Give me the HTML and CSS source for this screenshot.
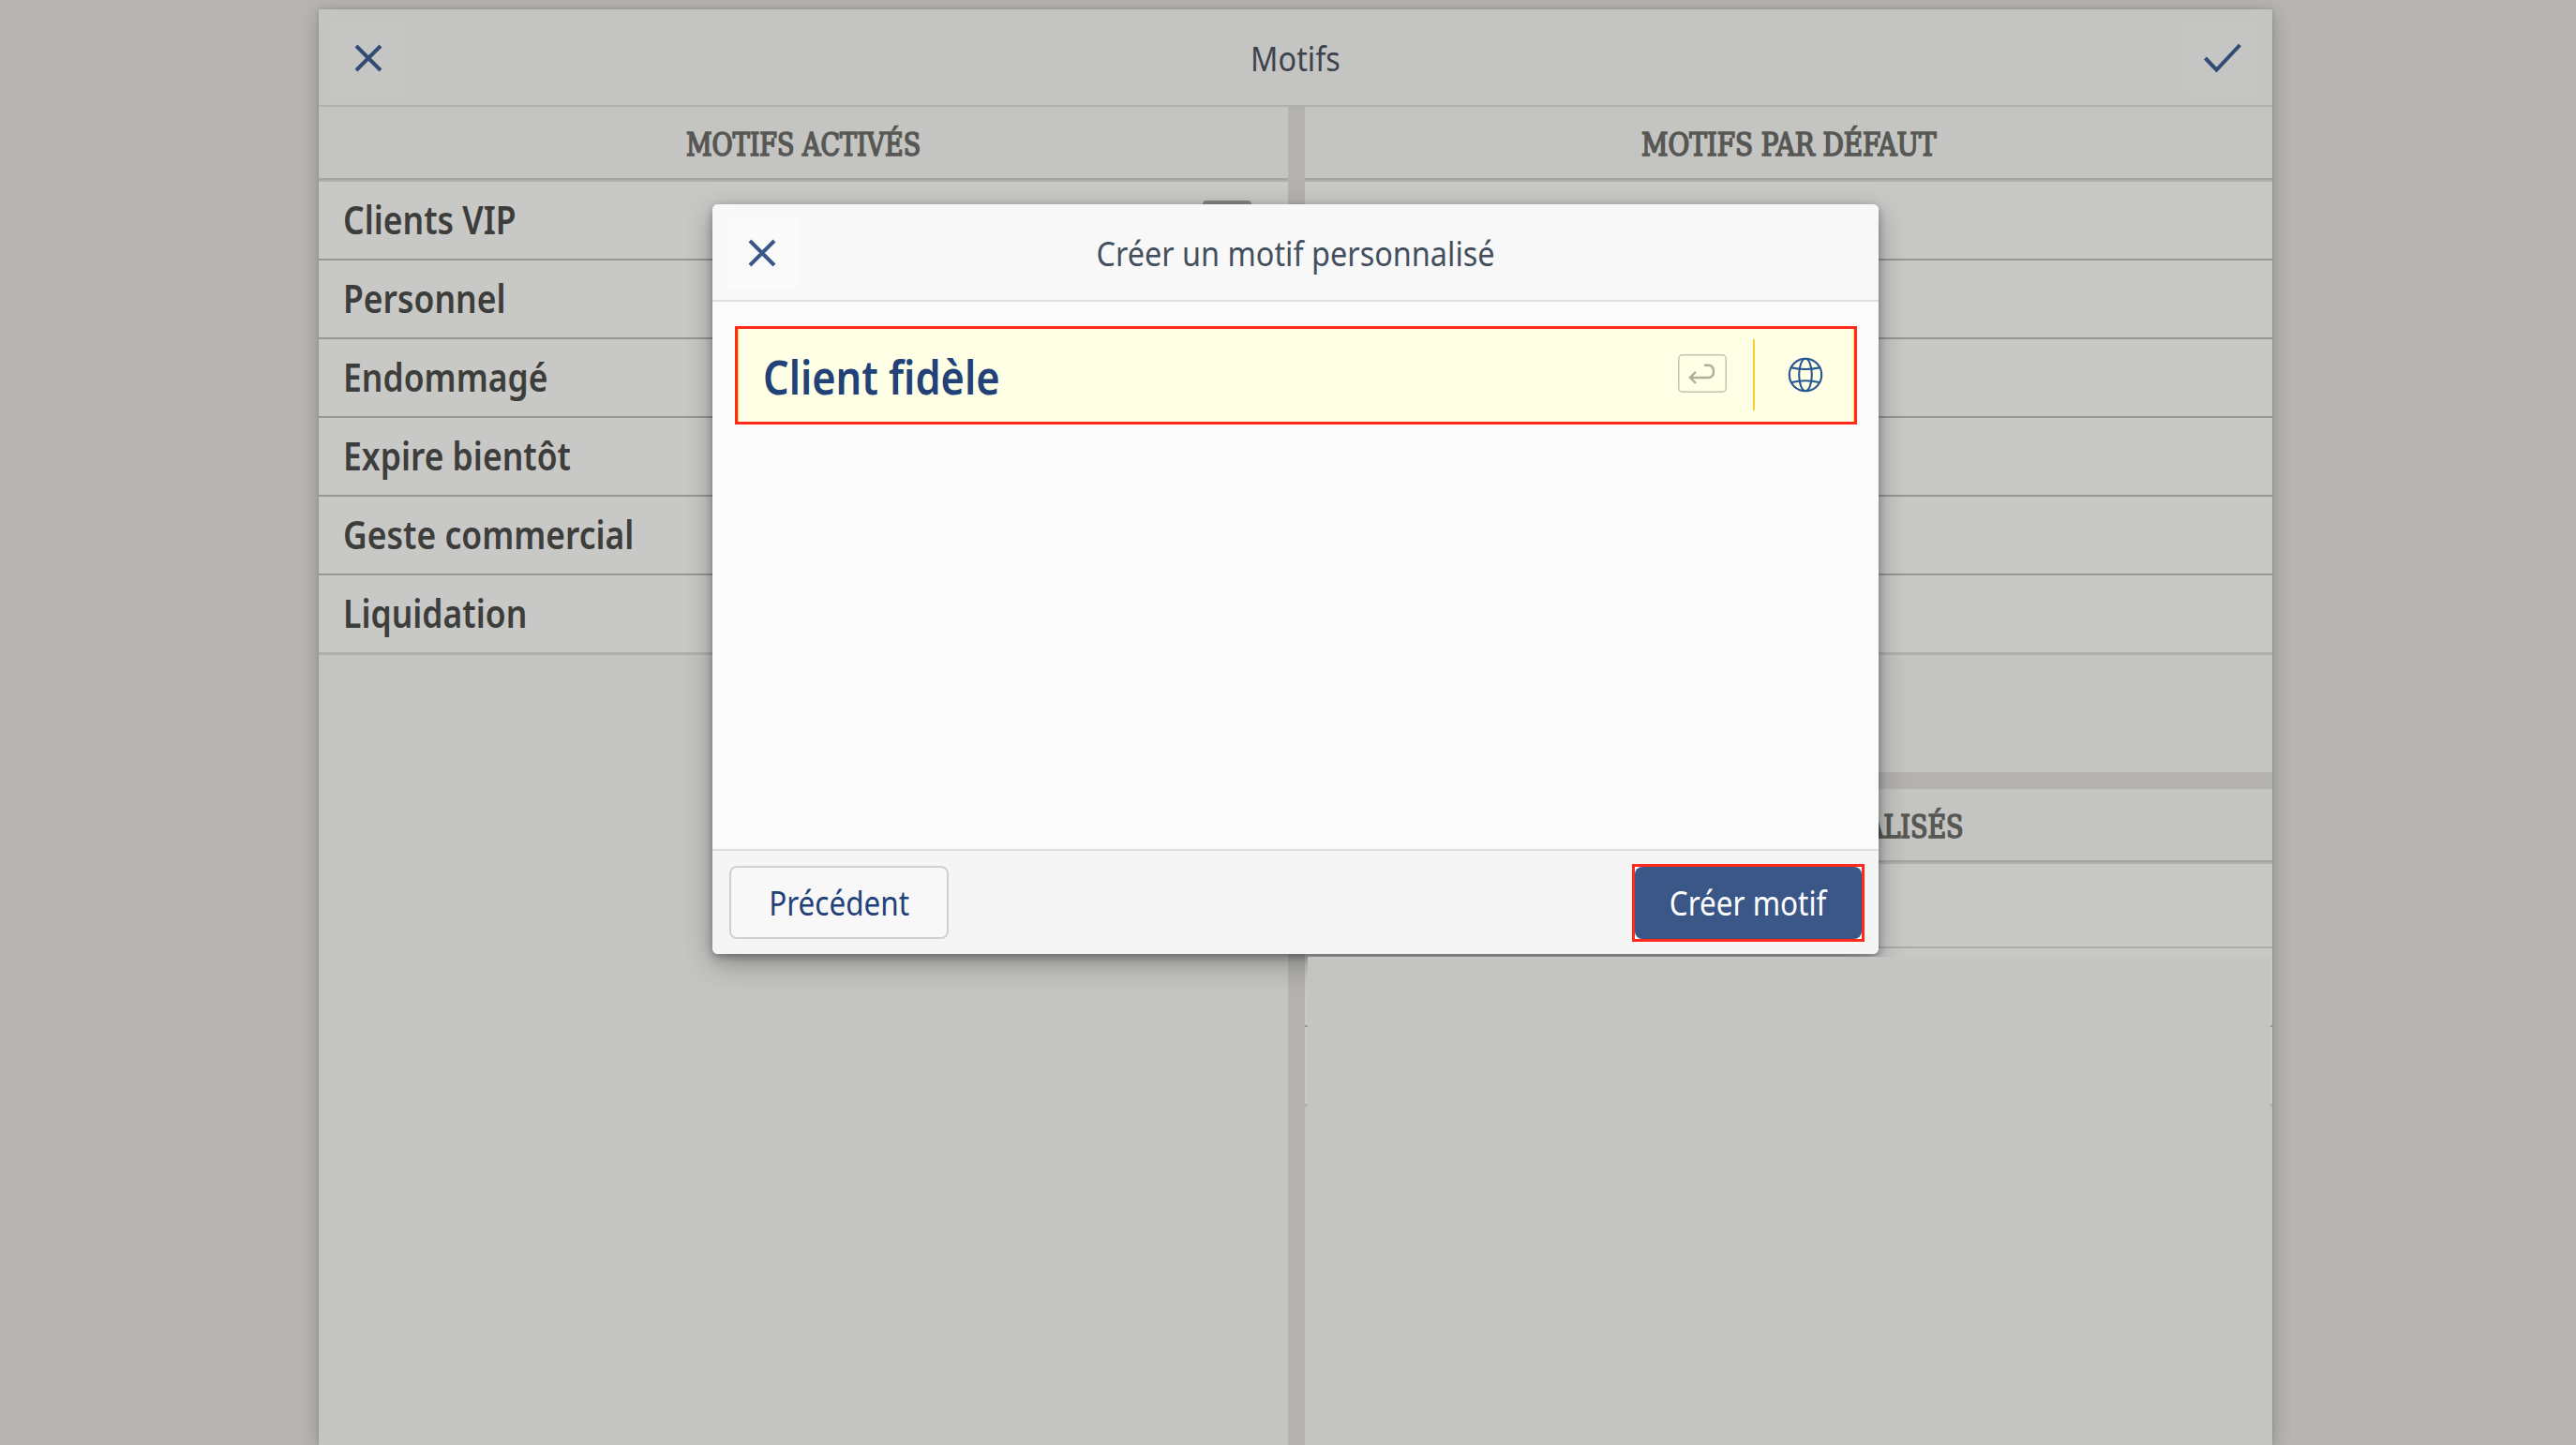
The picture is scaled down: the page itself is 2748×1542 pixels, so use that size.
FILE: index.html
```html
<!DOCTYPE html>
<html lang="fr">

<head>
    <meta charset="UTF-8">
    <meta name="viewport" content="width=device-width, initial-scale=1.0">
    <title>Motifs</title>
    <link rel="stylesheet" href="styles.css">
</head>

<body>
    <div class="page">
        <div class="header">
            <button class="icon-btn">
                <svg width="30" height="30" viewBox="0 0 30 30"><path d="M2 2L28 28M28 2L2 28"/></svg>
            </button>
            <h1>Motifs</h1>
            <button class="icon-btn">
                <svg width="40" height="32" viewBox="0 0 40 32"><path d="M1.5 16L13.5 28.5L38.5 2"/></svg>
            </button>
        </div>

        <div class="columns">
            <div class="column">
                <h2><span>MOTIFS ACTIVÉS</span></h2>
                <ul class="list">
                    <li><span>Clients VIP</span> <i class="handle"></i></li>
                    <li><span>Personnel</span></li>
                    <li><span>Endommagé</span></li>
                    <li><span>Expire bientôt</span></li>
                    <li><span>Geste commercial</span></li>
                    <li><span>Liquidation</span></li>
                </ul>
            </div>
            <div class="column right">
                <div class="defaults">
                    <h2><span class="wide">MOTIFS PAR DÉFAUT</span></h2>
                    <ul class="list">
                        <li></li>
                        <li></li>
                        <li></li>
                        <li></li>
                        <li></li>
                        <li></li>
                    </ul>
                </div>
                <div class="custom">
                    <h2><span>MOTIFS PERSONNALISÉS</span></h2>
                    <ul class="list">
                        <li></li>
                        <li></li>
                        <li></li>
                    </ul>
                    <div class="cover"></div>
                </div>
            </div>
        </div>
    </div>

    <div class="modal">
        <div class="header">
            <button class="icon-btn">
                <svg width="30" height="30" viewBox="0 0 30 30"><path d="M2 2L28 28M28 2L2 28"/></svg>
            </button>
            <h1>Créer un motif personnalisé</h1>
        </div>
        <div class="content">
            <div class="field">
                <div class="value"><span>Client fidèle</span></div>
                <svg class="enter" width="52" height="41" viewBox="0 0 52 41">
                    <rect x="0.75" y="0.75" width="50.5" height="39.5" rx="4"/>
                    <path d="M28 11.8H32C36 11.8 38 14.5 38 18.5C38 22.5 36 25 32 25H13M19 18.8L13 25L19 31"/>
                </svg>
                <div class="translate">
                    <svg width="38" height="38" viewBox="0 0 38 38">
                        <circle cx="19" cy="19" r="17.2"/>
                        <ellipse cx="19" cy="19" rx="6.8" ry="17.2"/>
                        <path d="M4.2 11.4Q19 14.6 33.8 11.4M4.2 27Q19 23.6 33.8 27"/>
                    </svg>
                </div>
            </div>
        </div>
        <div class="footer">
            <button class="btn"><span>Précédent</span></button>
            <div class="highlight">
                <button class="btn primary"><span>Créer motif</span></button>
            </div>
        </div>
    </div>
</body>

</html>
```
FILE: styles.css
```css
* {
    margin: 0;
    padding: 0;
    box-sizing: border-box;
}

body {
    font-family: "Noto Sans", sans-serif;
    background-color: #b6b5b3;
    height: 100vh;
    overflow: hidden;
    padding: 10px 324px 0 340px;
}

button {
    border: none;
    background: none;
    font-family: inherit;
}

svg {
    display: block;
    fill: none;
    stroke: #3b5788;
}

.page {
    height: 100%;
    display: flex;
    flex-direction: column;
    background-color: #c4c4c2;
    box-shadow: 0 4px 20px rgba(0, 0, 0, 0.22), 0 0 4px rgba(0, 0, 0, 0.15);
}

.header {
    height: 104px;
    flex: none;
    display: grid;
    grid-template-columns: 78px 1fr 78px;
    align-items: center;
    padding: 1px 14px 0;
    border-bottom: 2px solid #afafad;
}

.header h1 {
    font-size: 37px;
    font-weight: 400;
    text-align: center;
    color: #3c434d;
    transform: scaleX(0.876);
}

.icon-btn {
    width: 78px;
    height: 78px;
    display: flex;
    align-items: center;
    justify-content: center;
    background-color: #c5c5c3;
}

.icon-btn path {
    stroke-width: 4;
}

.page .icon-btn path {
    stroke: #324b75;
}

.columns {
    flex: 1;
    display: grid;
    grid-template-columns: 1034px 1032px;
    gap: 18px;
    background-color: #b3b2b0;
}

.column {
    background-color: #c4c4c2;
}

.column h2 {
    height: 80px;
    display: flex;
    align-items: center;
    justify-content: center;
    border-bottom: 2px solid #b0b0ae;
    box-shadow: inset 0 -2px #a4a4a2;
    font-family: "DejaVu Serif Condensed", "DejaVu Serif", serif;
    font-stretch: condensed;
    font-size: 34px;
    font-weight: 400;
    color: #575754;
    -webkit-text-stroke: 1.7px #575754;
    padding-top: 1px;
}

.column h2 span {
    white-space: nowrap;
    transform: scaleX(0.88);
}

.column h2 .wide {
    transform: scaleX(0.908);
}

.list {
    list-style: none;
}

.list li {
    height: 84px;
    display: flex;
    align-items: center;
    justify-content: space-between;
    padding: 0 39px 3px 26px;
    background-color: #c8c8c6;
    border-bottom: 2px solid #969694;
    font-size: 42px;
    font-weight: 600;
    color: #3d3d3b;
}

.list li span {
    transform: scaleX(0.845);
    transform-origin: left;
}

.list li:last-child {
    height: 85px;
    border-bottom: 3px solid #b0b0ae;
}

/* drag handle, only its top edge shows above the dialog */
.handle {
    width: 52px;
    height: 39px;
    border-radius: 4px;
    background-color: #858583;
}

.right {
    display: flex;
    flex-direction: column;
    gap: 18px;
    background-color: #b3b2b0;
}

.defaults {
    height: 710px;
    background-color: #c4c4c2;
}

.custom {
    flex: 1;
    position: relative;
    background-color: #c4c4c2;
}

.custom .list li:first-child {
    height: 90px;
    border-bottom: 2px solid #acacaa;
}

/* hides the empty rows, apart from their ends */
.cover {
    position: absolute;
    z-index: 1;
    left: 3px;
    right: 2px;
    top: 179px;
    height: 170px;
    background-color: #c4c4c2;
}

.modal {
    position: absolute;
    left: 760px;
    top: 218px;
    width: 1244px;
    height: 800px;
    display: flex;
    flex-direction: column;
    border-radius: 6px;
    overflow: hidden;
    background-color: #fbfbfb;
    box-shadow: 0 10px 30px rgba(0, 0, 0, 0.3), 0 3px 8px rgba(0, 0, 0, 0.3);
}

.modal .header {
    background-color: #f8f8f8;
    border-bottom-color: #dedede;
}

.modal .header h1 {
    color: #444f5e;
}

.modal .icon-btn {
    background-color: #fafafa;
}

.content {
    flex: 1;
    padding: 26px 23px 0 24px;
}

.field {
    height: 105px;
    display: flex;
    align-items: center;
    border: 3px solid #ff2a1c;
    background-color: #ffffe6;
    box-shadow: inset 1px 0 #f9d94a, inset -1px 0 #f9d94a;
}

.value {
    flex: 1;
    padding-left: 27px;
    font-size: 51px;
    font-weight: 600;
    color: #224178;
}

.value span {
    display: inline-block;
    transform: scaleX(0.85);
    transform-origin: left;
}

.enter {
    margin-right: 28px;
    margin-top: -4px;
}

.enter rect {
    stroke: #c3c2ac;
    stroke-width: 1.5;
}

.enter path {
    stroke: #b0af9b;
    stroke-width: 2.4;
}

.translate {
    width: 108px;
    height: 76px;
    display: flex;
    align-items: center;
    justify-content: center;
    border-left: 2px solid #f7cf38;
    padding-left: 2px;
    margin-top: -1px;
}

.translate svg {
    stroke: #265792;
    stroke-width: 2.1;
}

.footer {
    height: 112px;
    display: flex;
    align-items: center;
    justify-content: space-between;
    padding: 0 15px 0 18px;
    border-top: 2px solid #dedede;
    background-color: #f5f5f5;
}

.btn {
    width: 234px;
    height: 78px;
    border: 2px solid #d0d0d0;
    border-radius: 8px;
    background-color: #f8f8f8;
    font-size: 37px;
    color: #224178;
    padding-bottom: 2px;
}

.btn span {
    display: inline-block;
    transform: scaleX(0.85);
}

.highlight {
    border: 3px solid #ff2a1c;
    background-color: #fff;
}

.primary {
    display: block;
    width: 242px;
    height: 77px;
    border: none;
    background-color: #3b5788;
    color: #fff;
}
```
